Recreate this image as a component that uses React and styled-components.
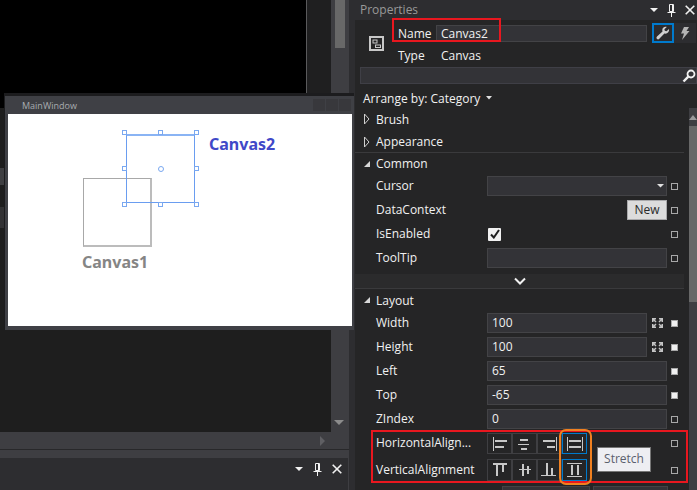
import React from 'react';
import styled, { createGlobalStyle } from 'styled-components';

const GlobalStyle = createGlobalStyle`
  html, body {
    margin: 0;
    padding: 0;
    background: #252526;
  }
  body {
    font-family: 'Open Sans', 'Noto Sans', sans-serif;
    overflow: hidden;
  }
`;

const Page = styled.div`
  position: relative;
  display: flex;
  width: 697px;
  height: 490px;
  overflow: hidden;
`;

/* left side : designer */
const Designer = styled.div`
  display: flex;
  flex-direction: column;
  width: 355px;
  height: 490px;
  background: #2d2d30;
`;

const DesignerTop = styled.div`
  display: flex;
  height: 432px;
`;

const Surface = styled.div`
  display: flex;
  flex-direction: column;
  width: 331px;
`;

const SurfaceHead = styled.div`
  display: flex;
  height: 108px;
`;

const BlackArea = styled.div`
  width: 306px;
  background: #000;
  border-right: 1px solid #5a5a5c;
`;

const SideStrip = styled.div`
  flex: 1;
  background: #1f1f20;
`;

const CodeArea = styled.div`
  flex: 1;
  background: #1e1e1e;
`;

const RulerStub = styled.div`
  width: 4px;
  height: ${p => p.$h}px;
  margin-top: ${p => p.$top}px;
  background: ${p => p.$color};
`;

const VScroll = styled.div`
  width: 18px;
  background: #3e3e42;
  padding: 0 4px;
  box-sizing: border-box;
  display: flex;
  flex-direction: column;
`;

const Thumb = styled.div`
  height: ${p => p.$h}px;
  background: #686868;
`;

const Spacer = styled.div`
  flex: 1;
`;

const DownArrow = styled.div`
  width: 0;
  height: 0;
  border-left: 5px solid transparent;
  border-right: 5px solid transparent;
  border-top: 5px solid #8c8c8c;
  margin: 0 0 7px -1px;
`;

const RightGutter = styled.div`
  width: 6px;
  background: #2d2d30;
`;

const HScroll = styled.div`
  display: flex;
  justify-content: flex-end;
  align-items: center;
  height: 18px;
  width: 349px;
  background: #3e3e42;
  border-bottom: 1px solid #28282a;
  padding-right: 24px;
  box-sizing: border-box;
`;

const RightArrow = styled.div`
  width: 0;
  height: 0;
  border-top: 5px solid transparent;
  border-bottom: 5px solid transparent;
  border-left: 5px solid #5f5f63;
`;

const StatusStrip = styled.div`
  height: 8px;
  width: 349px;
  background: #3e3e42;
`;

const ToolTitle = styled.div`
  display: flex;
  align-items: center;
  height: 22px;
  width: 349px;
  box-sizing: border-box;
  padding: 0 6px 0 0;
  gap: 7px;
  border-right: 1px solid #3e3e42;
`;

const ToolBottom = styled.div`
  flex: 1;
  width: 349px;
  box-sizing: border-box;
  border-right: 1px solid #3e3e42;
`;

const Dots = styled.div`
  flex: 1;
  height: 4px;
  background-image: radial-gradient(#46464a 0.6px, transparent 0.7px);
  background-size: 3px 2px;
`;

const IconBtn = styled.svg`
  display: block;
  flex: none;
  margin-left: ${p => p.$ml || 0}px;
`;

/* floating preview window */
const PreviewWindow = styled.div`
  position: absolute;
  left: 4px;
  top: 93px;
  width: 350px;
  height: 237px;
  box-sizing: border-box;
  background: #3f4045;
  border-top: 3px solid #1c1c1e;
  border-left: 1px solid #1c1c1e;
  padding: 0 2px 4px 3px;
  display: flex;
  flex-direction: column;
`;

const PreviewBar = styled.div`
  display: flex;
  align-items: center;
  height: 18px;
  padding: 0 1px 0 14px;
  color: #a8acb0;
  font-size: 9px;
  flex: none;
`;

const PreviewTitle = styled.span`
  flex: 1;
`;

const WinBtn = styled.span`
  width: 12px;
  height: 12px;
  margin-left: 1px;
  background: #38383c;
`;

const PreviewBody = styled.div`
  position: relative;
  flex: 1;
  background: #fff;
`;

const CanvasBox = styled.div`
  position: absolute;
  left: 75px;
  top: 64px;
  width: 69px;
  height: 69px;
  box-sizing: border-box;
  border: 1px solid #a8a8a8;
  border-right: 2px solid #bcbcbc;
  border-bottom: 2px solid #bcbcbc;
`;

const SelectBox = styled.div`
  position: absolute;
  left: 118px;
  top: 20px;
  width: 69px;
  height: 69px;
  box-sizing: border-box;
  border: 1px solid #6a9df0;
  border-top: 2px solid #8ab4f4;
`;

const Handle = styled.span`
  position: absolute;
  width: ${p => (p.$round ? 6 : 5)}px;
  height: ${p => (p.$round ? 6 : 5)}px;
  box-sizing: border-box;
  background: #fff;
  border: 1px solid #7aa8f0;
  left: ${p => p.$x}px;
  top: ${p => p.$y}px;
  border-radius: ${p => (p.$round ? '50%' : '0')};
`;

const CanvasLabel = styled.span`
  position: absolute;
  left: ${p => p.$x}px;
  top: ${p => p.$y}px;
  color: ${p => p.$color};
  font: bold 16px/18px 'Noto Sans', sans-serif;
`;

/* right side : properties panel */
const Panel = styled.div`
  display: flex;
  flex-direction: column;
  flex: 1;
  min-width: 0;
  background: #252526;
  color: #f1f1f1;
  font-size: 12px;
`;

const PanelTitle = styled.div`
  display: flex;
  align-items: center;
  height: 20px;
  padding: 0 2px 0 5px;
  gap: 6px;
  background: #2d2d30;
  color: #999;
  font-size: 12px;
  flex: none;
`;

const PanelName = styled.span`
  line-height: 20px;
`;

const InfoBlock = styled.div`
  display: flex;
  flex: none;
  height: 47px;
`;

const KindIcon = styled.div`
  display: flex;
  align-items: center;
  justify-content: center;
  width: 43px;
  flex: none;
`;

const InfoRows = styled.div`
  display: flex;
  flex-direction: column;
  flex: 1;
  padding-top: 2px;
`;

const InfoRow = styled.div`
  display: flex;
  align-items: center;
  height: 23px;
`;

const InfoLabel = styled.span`
  width: 38px;
  flex: none;
`;

const NameInput = styled.div`
  width: 205px;
  height: 15px;
  line-height: 15px;
  padding-left: 4px;
  background: #333337;
  border: 1px solid #434346;
  flex: none;
`;

const InfoValue = styled.span`
  padding-left: 5px;
`;

const ModeBtn = styled.div`
  display: flex;
  align-items: center;
  justify-content: center;
  width: 22px;
  height: 20px;
  box-sizing: border-box;
  margin-left: ${p => p.$ml || 0}px;
  border: 2px solid ${p => (p.$active ? '#007acc' : 'transparent')};
  background: ${p => (p.$active ? '#2b2b2d' : '#2d2d30')};
  flex: none;
`;

const SearchBox = styled.div`
  display: flex;
  align-items: center;
  justify-content: flex-end;
  height: 15px;
  margin-left: 5px;
  background: #333337;
  border: 1px solid #3f3f46;
  flex: none;
`;

const ArrangeRow = styled.div`
  display: flex;
  align-items: center;
  height: 26px;
  padding-left: 8px;
  gap: 6px;
  margin-top: 1px;
  flex: none;
`;

const Body = styled.div`
  display: flex;
  flex: 1;
  min-height: 0;
`;

const Groups = styled.div`
  width: 329px;
  flex: none;
  display: flex;
  flex-direction: column;
`;

const PanelScroll = styled.div`
  width: 8px;
  margin: -3px 0 0 5px;
  background: #3e3e42;
  display: flex;
  flex-direction: column;
  align-items: center;
`;

const PanelThumb = styled.div`
  width: 100%;
  height: 176px;
  margin-top: 6px;
  background: #686868;
`;

const UpArrow = styled.div`
  width: 0;
  height: 0;
  margin-top: 7px;
  border-left: 4px solid transparent;
  border-right: 4px solid transparent;
  border-bottom: 5px solid #9a9a9c;
`;

const GroupHead = styled.div`
  display: flex;
  align-items: center;
  height: ${p => p.$h}px;
  padding-left: 8px;
  padding-top: ${p => p.$pt || 0}px;
  padding-bottom: ${p => p.$pb || 0}px;
  border-top: ${p => (p.$line ? '1px solid #3a3a3c' : '0')};
  box-sizing: border-box;
  flex: none;
`;

const Caret = styled.div`
  width: 13px;
  flex: none;
  display: flex;
`;

const Row = styled.div`
  display: flex;
  align-items: center;
  height: ${p => p.$h || 24}px;
  margin-top: ${p => p.$top || 0}px;
  padding-left: 21px;
  flex: none;
`;

const RowLabel = styled.span`
  width: 111px;
  padding-bottom: 2px;
  flex: none;
  white-space: nowrap;
`;

const Field = styled.div`
  display: flex;
  align-items: center;
  justify-content: space-between;
  width: ${p => p.$w || 180}px;
  height: 20px;
  box-sizing: border-box;
  padding: 0 4px 2px;
  background: #333337;
  border: 1px solid #434346;
  flex: none;
`;

const DropCaret = styled.svg`
  display: block;
  margin: 2px -2px 0 0;
`;

const ValueSlot = styled.div`
  display: flex;
  align-items: center;
  justify-content: ${p => (p.$end ? 'flex-end' : 'flex-start')};
  padding-left: ${p => (p.$end ? 0 : 1)}px;
  box-sizing: border-box;
  width: 180px;
  flex: none;
`;

const NewBtn = styled.div`
  width: 40px;
  height: 20px;
  line-height: 17px;
  text-align: center;
  box-sizing: border-box;
  background: #dcdcdc;
  border: 1px solid #a9a9ab;
  color: #2a2a2a;
`;

const Check = styled.div`
  display: flex;
  align-items: center;
  justify-content: center;
  width: 13px;
  height: 13px;
  background: #f1f1f1;
  border-radius: 1px;
`;

const Marker = styled.span`
  display: block;
  width: 5px;
  height: 5px;
  margin-left: ${p => p.$ml ?? 4}px;
  border: 1px solid #a8a8a8;
  background: ${p => (p.$on ? '#f1f1f1' : 'transparent')};
  flex: none;
`;

const ExpandRow = styled.div`
  display: flex;
  align-items: center;
  justify-content: center;
  height: 14px;
  margin-top: 4px;
  background: #2b2b2c;
  flex: none;
`;

const AlignGroup = styled.div`
  display: flex;
  width: 100px;
  flex: none;
`;

const AlignBtn = styled.div`
  display: flex;
  align-items: center;
  justify-content: center;
  width: 25px;
  height: ${p => (p.$tall ? 22 : 21)}px;
  box-sizing: border-box;
  border: 1px solid ${p => (p.$active ? '#007acc' : '#3f3f42')};
`;

const Fill = styled.span`
  width: 80px;
  flex: none;
`;

const NextRow = styled.div`
  display: flex;
  gap: 3px;
  margin-top: 4px;
  padding-left: 147px;
  flex: none;
`;

/* annotations drawn on top of the screenshot */
const RedBox = styled.div`
  position: absolute;
  left: ${p => p.$x}px;
  top: ${p => p.$y}px;
  width: ${p => p.$w}px;
  height: ${p => p.$h}px;
  border: 2px solid #e8171f;
  box-sizing: border-box;
`;

const OrangeBox = styled.div`
  position: absolute;
  left: 559px;
  top: 429px;
  width: 33px;
  height: 56px;
  border: 2px solid #f08020;
  border-radius: 7px;
  box-sizing: border-box;
`;

const Tip = styled.div`
  position: absolute;
  left: 597px;
  top: 447px;
  width: 54px;
  height: 25px;
  line-height: 22px;
  text-align: center;
  box-sizing: border-box;
  background: #eeeef2;
  border: 1px solid #767676;
  color: #5a5f6e;
  font-size: 12px;
`;

const CollapseIcon = () => (
  <IconBtn width="8" height="12" viewBox="0 0 8 12">
    <path d="M1.5 1 L6 6 L1.5 11 Z" fill="none" stroke="#d0d0d0" />
  </IconBtn>
);

const OpenIcon = () => (
  <IconBtn width="8" height="12" viewBox="0 0 8 12">
    <path d="M1 9 L7 3 L7 9 Z" fill="#d8d8d8" />
  </IconBtn>
);

const TitleIcons = () => (
  <>
    <IconBtn width="8" height="6" viewBox="0 0 8 6">
      <path d="M0 1 H8 L4 5 Z" fill="#f1f1f1" />
    </IconBtn>
    <IconBtn width="9" height="13" viewBox="0 0 9 13" $ml={3}>
      <path d="M2.5 .5 H6.5 V7.5 H2.5 Z M5.5 1 V7 M.5 8.5 H8.5 M4.5 9 V13" fill="none" stroke="#f1f1f1" />
    </IconBtn>
    <IconBtn width="10" height="10" viewBox="0 0 10 10" $ml={3}>
      <path d="M.7 .7 L9.3 9.3 M9.3 .7 L.7 9.3" fill="none" stroke="#f1f1f1" strokeWidth="1.6" />
    </IconBtn>
  </>
);

const Wrench = () => (
  <svg width="14" height="14" viewBox="0 0 14 14">
    <path d="M13 3 L10.5 5.2 L8.8 4.8 L8.4 3.2 L10.8 1 C8.5 .2 6.2 1.8 6.3 4.2 C6.3 4.8 6.4 5.2 6.5 5.5 L1 10.5 C.2 11.4 .4 12.4 1 13 C1.8 13.6 2.6 13.5 3.3 12.8 L8.4 7.5 C11 8.3 13.6 6 13 3 Z" fill="#d0d0d0" />
  </svg>
);

const Bolt = () => (
  <svg width="10" height="13" viewBox="0 0 10 13">
    <path d="M4 0 H9 L6.5 4 H9.5 L2 13 L4 6.5 H1 Z" fill="#b4b4b4" />
  </svg>
);

const Magnifier = () => (
  <IconBtn width="14" height="14" viewBox="0 0 14 14">
    <circle cx="9" cy="5" r="3.5" fill="none" stroke="#f1f1f1" strokeWidth="1.8" />
    <path d="M6.3 7.7 L1.5 12.5" stroke="#f1f1f1" strokeWidth="2.4" />
  </IconBtn>
);

const CanvasKind = () => (
  <svg width="15" height="15" viewBox="0 0 15 15">
    <rect x="1" y="1" width="13" height="13" fill="none" stroke="#c8c8c8" strokeWidth="2" />
    <rect x="4" y="4" width="4" height="3" fill="none" stroke="#c8c8c8" />
    <rect x="6.5" y="9" width="5" height="2.5" fill="none" stroke="#c8c8c8" />
  </svg>
);

const Resize = () => (
  <IconBtn width="11" height="10" viewBox="0 0 11 10" $ml={5}>
    <path d="M0 0 H4 V1.5 H2.5 L4.5 3.5 L3.5 4.5 L1.5 2.5 V4 H0 Z M11 0 H7 V1.5 H8.5 L6.5 3.5 L7.5 4.5 L9.5 2.5 V4 H11 Z M0 10 H4 V8.5 H2.5 L4.5 6.5 L3.5 5.5 L1.5 7.5 V6 H0 Z M11 10 H7 V8.5 H8.5 L6.5 6.5 L7.5 5.5 L9.5 7.5 V6 H11 Z" fill="#c4c4c4" />
  </IconBtn>
);

// x, y, w, h of each stroke of the alignment icons
const alignRects = {
  left: [[3, 2, 1, 14], [5, 5, 12, 2], [5, 11, 9, 2]],
  center: [[3, 9, 11, 1], [5, 4, 8, 2], [6, 13, 6, 2]],
  right: [[16, 2, 1, 14], [3, 5, 12, 2], [7, 11, 8, 2]],
  stretch: [[2, 2, 1, 14], [17, 2, 1, 14], [4, 5, 12, 2], [4, 11, 12, 2]],
  top: [[3, 2, 14, 2], [6, 4, 2, 11], [12, 4, 2, 7]],
  middle: [[4, 8, 12, 1], [7, 3, 2, 12], [12, 5, 2, 8]],
  bottom: [[1, 14, 15, 1], [6, 2, 2, 12], [11, 7, 2, 7]],
  vstretch: [[2, 2, 15, 1], [2, 15, 15, 1], [6, 4, 2, 10], [12, 4, 2, 10]],
};

const AlignIcon = ({ kind, h = 17 }) => (
  <IconBtn width="19" height={h} viewBox={`0 0 19 ${h}`} shapeRendering="crispEdges">
    {alignRects[kind].map(([x, y, w, rh]) => (
      <rect key={`${x}-${y}`} x={x} y={y} width={w} height={rh} fill="#c8c8c8" />
    ))}
  </IconBtn>
);

const handles = [
  [-5, -6, false], [31, -6, false], [67, -6, false],
  [-5, 30, false], [31, 30, true], [67, 30, false],
  [-5, 66, false], [31, 66, false], [67, 66, false],
];

const Prop = ({ label, value, short, on }) => (
  <Row>
    <RowLabel>{label}</RowLabel>
    <Field $w={short ? 160 : 180}>{value}</Field>
    {short && <Resize />}
    <Marker $on={on} $ml={short ? 8 : 4} />
  </Row>
);

const App = () => {
  return (
    <Page>
      <GlobalStyle />

      <Designer>
        <DesignerTop>
          <Surface>
            <SurfaceHead>
              <BlackArea />
              <SideStrip />
            </SurfaceHead>
            <CodeArea>
              <RulerStub $top={60} $h={17} $color="#3f3f42" />
              <RulerStub $top={22} $h={21} $color="#323234" />
            </CodeArea>
          </Surface>
          <VScroll>
            <Thumb $h={48} />
            <Spacer />
            <Thumb $h={22} />
            <Spacer />
            <DownArrow />
          </VScroll>
          <RightGutter />
        </DesignerTop>
        <HScroll>
          <RightArrow />
        </HScroll>
        <StatusStrip />
        <ToolTitle>
          <Dots />
          <TitleIcons />
        </ToolTitle>
        <ToolBottom />
      </Designer>

      <PreviewWindow>
        <PreviewBar>
          <PreviewTitle>MainWindow</PreviewTitle>
          <WinBtn />
          <WinBtn />
          <WinBtn />
        </PreviewBar>
        <PreviewBody>
          <CanvasBox />
          <CanvasLabel $x={74} $y={139} $color="#858585">Canvas1</CanvasLabel>
          <SelectBox>
            {handles.map(([x, y, round]) => (
              <Handle key={`${x}-${y}`} $x={x} $y={y} $round={round} />
            ))}
          </SelectBox>
          <CanvasLabel $x={201} $y={21} $color="#4048c8">Canvas2</CanvasLabel>
        </PreviewBody>
      </PreviewWindow>

      <Panel>
        <PanelTitle>
          <PanelName>Properties</PanelName>
          <Dots />
          <TitleIcons />
        </PanelTitle>
        <InfoBlock>
          <KindIcon><CanvasKind /></KindIcon>
          <InfoRows>
            <InfoRow>
              <InfoLabel>Name</InfoLabel>
              <NameInput>Canvas2</NameInput>
              <ModeBtn $active $ml={5}><Wrench /></ModeBtn>
              <ModeBtn><Bolt /></ModeBtn>
            </InfoRow>
            <InfoRow>
              <InfoLabel>Type</InfoLabel>
              <InfoValue>Canvas</InfoValue>
            </InfoRow>
          </InfoRows>
        </InfoBlock>
        <SearchBox><Magnifier /></SearchBox>
        <ArrangeRow>
          Arrange by: Category
          <svg width="6" height="4" viewBox="0 0 6 4"><path d="M0 0 H6 L3 3.5 Z" fill="#e0e0e0" /></svg>
        </ArrangeRow>
        <Body>
          <Groups>
            <GroupHead $h={18} $pb={2}><Caret><CollapseIcon /></Caret>Brush</GroupHead>
            <GroupHead $h={23} $pt={2}><Caret><CollapseIcon /></Caret>Appearance</GroupHead>
            <GroupHead $h={22} $line><Caret><OpenIcon /></Caret>Common</GroupHead>
            <Row>
              <RowLabel>Cursor</RowLabel>
              <Field>
                <span />
                <DropCaret width="7" height="4" viewBox="0 0 7 4"><path d="M0 0 H7 L3.5 3.5 Z" fill="#e0e0e0" /></DropCaret>
              </Field>
              <Marker />
            </Row>
            <Row>
              <RowLabel>DataContext</RowLabel>
              <ValueSlot $end><NewBtn>New</NewBtn></ValueSlot>
              <Marker />
            </Row>
            <Row>
              <RowLabel>IsEnabled</RowLabel>
              <ValueSlot>
                <Check>
                  <svg width="10" height="10" viewBox="0 0 10 10">
                    <path d="M1 5.5 L3.8 8.5 L9 1" fill="none" stroke="#1e1e1e" strokeWidth="2" />
                  </svg>
                </Check>
              </ValueSlot>
              <Marker />
            </Row>
            <Prop label="ToolTip" />
            <ExpandRow>
              <svg width="12" height="8" viewBox="0 0 12 8">
                <path d="M1 1.5 L6 6.5 L11 1.5" fill="none" stroke="#f1f1f1" strokeWidth="2" />
              </svg>
            </ExpandRow>
            <GroupHead $h={23} $line><Caret><OpenIcon /></Caret>Layout</GroupHead>
            <Prop label="Width" value="100" short on />
            <Prop label="Height" value="100" short on />
            <Prop label="Left" value="65" on />
            <Prop label="Top" value="-65" on />
            <Prop label="ZIndex" value="0" />
            <Row $h={23} $top={1}>
              <RowLabel>HorizontalAlign...</RowLabel>
              <AlignGroup>
                <AlignBtn><AlignIcon kind="left" /></AlignBtn>
                <AlignBtn><AlignIcon kind="center" /></AlignBtn>
                <AlignBtn><AlignIcon kind="right" /></AlignBtn>
                <AlignBtn $active><AlignIcon kind="stretch" /></AlignBtn>
              </AlignGroup>
              <Fill />
              <Marker />
            </Row>
            <Row $top={3}>
              <RowLabel>VerticalAlignment</RowLabel>
              <AlignGroup>
                <AlignBtn $tall><AlignIcon kind="top" h={18} /></AlignBtn>
                <AlignBtn $tall><AlignIcon kind="middle" h={18} /></AlignBtn>
                <AlignBtn $tall><AlignIcon kind="bottom" h={18} /></AlignBtn>
                <AlignBtn $tall $active><AlignIcon kind="vstretch" h={18} /></AlignBtn>
              </AlignGroup>
              <Fill />
              <Marker />
            </Row>
            <NextRow>
              <Field $w={88} />
              <Field $w={75} />
            </NextRow>
          </Groups>
          <PanelScroll>
            <UpArrow />
            <PanelThumb />
          </PanelScroll>
        </Body>
      </Panel>

      <RedBox $x={392} $y={18} $w={109} $h={24} />
      <RedBox $x={371} $y={430} $w={317} $h={53} />
      <OrangeBox />
      <Tip>Stretch</Tip>
    </Page>
  );
};

export default App;
